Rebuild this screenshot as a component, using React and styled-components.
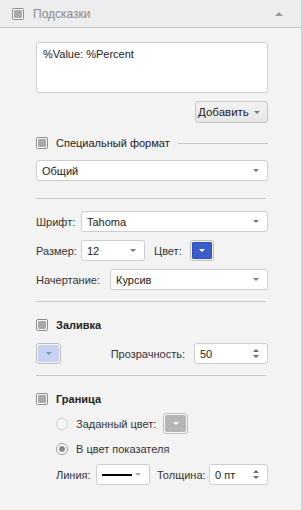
import React from 'react';
import styled, { createGlobalStyle } from 'styled-components';

const GlobalStyle = createGlobalStyle`
  body {
    margin: 0;
    font-family: "Liberation Sans", Arial, sans-serif;
    font-size: 11px;
    color: #333;
  }
`;

const Panel = styled.div`
  width: 303px;
  height: 510px;
  box-sizing: border-box;
  background: #f3f3f3;
  border-right: 2px solid #d2d2d2;
  overflow: hidden;
`;

const Header = styled.div`
  height: 27px;
  display: flex;
  align-items: center;
  padding: 0 18px 0 12px;
  background: #ecedef;
  border-bottom: 1px solid #c6c6c6;
  color: #8a8a8a;
  font-size: 12px;
`;

const HeaderTitle = styled.span`
  margin-left: 9px;
  flex: 1;
`;

const CollapseArrow = styled.span`
  width: 0;
  height: 0;
  border-left: 4px solid transparent;
  border-right: 4px solid transparent;
  border-bottom: 4px solid #9a9a9a;
`;

const Content = styled.div`
  padding: 14px 33px 0 36px;
  display: flex;
  flex-direction: column;
`;

const TextArea = styled.div`
  height: 51px;
  box-sizing: border-box;
  background: #fff;
  border: 1px solid #cdcdcd;
  border-radius: 3px;
  padding: 5px 6px;
  color: #222;
`;

const ButtonRow = styled.div`
  display: flex;
  justify-content: flex-end;
  margin-top: 8px;
`;

const DropButton = styled.div`
  width: 73px;
  height: 22px;
  box-sizing: border-box;
  border: 1px solid #c6c6c6;
  border-radius: 3px;
  background: linear-gradient(#f2f2f2, #e6e6e6);
  display: flex;
  align-items: center;
  justify-content: space-between;
  padding: 0 7px 0 2px;
  color: #222;
  font-size: 11.5px;
`;

const Arrow = styled.span`
  width: 0;
  height: 0;
  border-left: 3px solid transparent;
  border-right: 3px solid transparent;
  border-top: 3px solid ${p => p.$color || '#7a7a7a'};
`;

const UpArrow = styled.span`
  width: 0;
  height: 0;
  border-left: 3px solid transparent;
  border-right: 3px solid transparent;
  border-bottom: 3px solid #6a6a6a;
`;

const CheckRow = styled.div`
  display: flex;
  align-items: center;
  height: 18px;
  margin-top: ${p => p.$top || 0}px;
  font-weight: ${p => (p.$bold ? 'bold' : 'normal')};
  color: #222;
`;

const CheckBox = styled.span`
  width: 12px;
  height: 12px;
  box-sizing: border-box;
  border: 1px solid #8c8c8c;
  border-radius: 2px;
  background: #fff;
  padding: 1px;
  margin-right: 8px;
  flex-shrink: 0;
  &::after {
    content: '';
    display: block;
    width: 100%;
    height: 100%;
    background: #a9a9a9;
    border-radius: 1px;
  }
`;

const HeaderCheck = styled(CheckBox)`
  margin-right: 0;
`;

const LineFill = styled.span`
  flex: 1;
  height: 1px;
  background: #c8c8c8;
  margin-left: 8px;
`;

const Select = styled.div`
  box-sizing: border-box;
  height: 21px;
  width: ${p => (p.$width ? `${p.$width}px` : 'auto')};
  flex: ${p => (p.$grow ? '1 1 auto' : 'none')};
  background: #fff;
  border: 1px solid #cdcdcd;
  border-radius: 3px;
  display: flex;
  align-items: center;
  justify-content: space-between;
  padding: 0 8px 0 5px;
  color: #222;
  margin-top: ${p => p.$top || 0}px;
`;

const Separator = styled.div`
  height: 1px;
  background: #c8c8c8;
  margin: ${p => p.$top}px 2px 0 0;
`;

const FormRow = styled.div`
  display: flex;
  align-items: center;
  min-height: 18px;
  margin-top: ${p => p.$top || 0}px;
  padding-left: ${p => p.$indent || 0}px;
`;

const Label = styled.span`
  color: #333;
  flex-shrink: 0;
  width: ${p => (p.$width ? `${p.$width}px` : 'auto')};
  margin-right: ${p => p.$gap || 6}px;
  margin-left: ${p => p.$left || 0}px;
  white-space: nowrap;
`;

const ColorButton = styled.div`
  width: ${p => p.$w || 24}px;
  height: 21px;
  flex-shrink: 0;
  box-sizing: border-box;
  border: 1px solid #bdbdbd;
  border-radius: 3px;
  padding: 1px;
  background: #f7f7f7;
  & > span {
    display: flex;
    align-items: center;
    justify-content: center;
    width: 100%;
    height: 100%;
    border-radius: 2px;
    background: ${p => p.$color};
    box-shadow: inset 0 0 0 1px ${p => p.$edge || 'transparent'};
  }
`;

const Spacer = styled.span`
  flex: 1;
`;

const Spin = styled.div`
  box-sizing: border-box;
  height: 21px;
  width: ${p => p.$width}px;
  flex-shrink: 0;
  background: #fff;
  border: 1px solid #cdcdcd;
  border-radius: 3px;
  display: flex;
  align-items: center;
  justify-content: space-between;
  padding: 0 8px 0 5px;
  color: #222;
`;

const SpinArrows = styled.span`
  display: flex;
  flex-direction: column;
  gap: 3px;
`;

const Radio = styled.span`
  width: 12px;
  height: 12px;
  flex-shrink: 0;
  box-sizing: border-box;
  border-radius: 50%;
  border: 1px solid ${p => (p.$checked ? '#9a9a9a' : '#cfcfcf')};
  background: ${p => (p.$checked ? '#fff' : '#f7f7f7')};
  margin-right: 8px;
  display: flex;
  align-items: center;
  justify-content: center;
  &::after {
    content: '';
    width: 6px;
    height: 6px;
    border-radius: 50%;
    background: ${p => (p.$checked ? '#8a8a8a' : 'transparent')};
  }
`;

const LineSample = styled.span`
  width: 30px;
  height: 2px;
  background: #000;
`;

function SpinBox({ width, value }) {
  return (
    <Spin $width={width}>
      <span>{value}</span>
      <SpinArrows>
        <UpArrow />
        <Arrow $color="#6a6a6a" />
      </SpinArrows>
    </Spin>
  );
}

export default function App() {
  return (
    <Panel>
      <GlobalStyle />
      <Header>
        <HeaderCheck />
        <HeaderTitle>Подсказки</HeaderTitle>
        <CollapseArrow />
      </Header>
      <Content>
        <TextArea>%Value: %Percent</TextArea>
        <ButtonRow>
          <DropButton>
            <span>Добавить</span>
            <Arrow />
          </DropButton>
        </ButtonRow>
        <CheckRow $top={11}>
          <CheckBox />
          <span>Специальный формат</span>
          <LineFill />
        </CheckRow>
        <Select $top={8}>
          <span>Общий</span>
          <Arrow />
        </Select>
        <Separator $top={17} />

        <FormRow $top={12}>
          <Label $width={40} $gap={5}>Шрифт:</Label>
          <Select $grow>
            <span>Tahoma</span>
            <Arrow />
          </Select>
        </FormRow>
        <FormRow $top={8}>
          <Label $width={40} $gap={5}>Размер:</Label>
          <Select $width={64}>
            <span>12</span>
            <Arrow />
          </Select>
          <Label $left={9} $width={30} $gap={6}>Цвет:</Label>
          <ColorButton $color="#3a5ccc" $edge="#2f4fb5">
            <span>
              <Arrow $color="#fff" />
            </span>
          </ColorButton>
        </FormRow>
        <FormRow $top={8}>
          <Label $width={68} $gap={6}>Начертание:</Label>
          <Select $grow>
            <span>Курсив</span>
            <Arrow />
          </Select>
        </FormRow>
        <Separator $top={11} />

        <CheckRow $top={14} $bold>
          <CheckBox />
          <span>Заливка</span>
        </CheckRow>
        <FormRow $top={9}>
          <ColorButton $w={25} $color="#c9d1f2">
            <span>
              <Arrow $color="#8a8fa8" />
            </span>
          </ColorButton>
          <Spacer />
          <Label $gap={9}>Прозрачность:</Label>
          <SpinBox width={74} value="50" />
        </FormRow>
        <Separator $top={11} />

        <CheckRow $top={14} $bold>
          <CheckBox />
          <span>Граница</span>
        </CheckRow>
        <FormRow $top={5} $indent={20}>
          <Radio />
          <Label $gap={7}>Заданный цвет:</Label>
          <ColorButton $w={25} $color="#b5b5b5">
            <span>
              <Arrow $color="#fff" />
            </span>
          </ColorButton>
        </FormRow>
        <FormRow $top={6} $indent={20}>
          <Radio $checked />
          <Label>В цвет показателя</Label>
        </FormRow>
        <FormRow $top={6} $indent={20}>
          <Label $width={34} $gap={6}>Линия:</Label>
          <Select $width={54}>
            <LineSample />
            <Arrow $color="#aaa" />
          </Select>
          <Label $left={7} $width={46} $gap={6}>Толщина:</Label>
          <SpinBox width={59} value="0 пт" />
        </FormRow>
      </Content>
    </Panel>
  );
}
